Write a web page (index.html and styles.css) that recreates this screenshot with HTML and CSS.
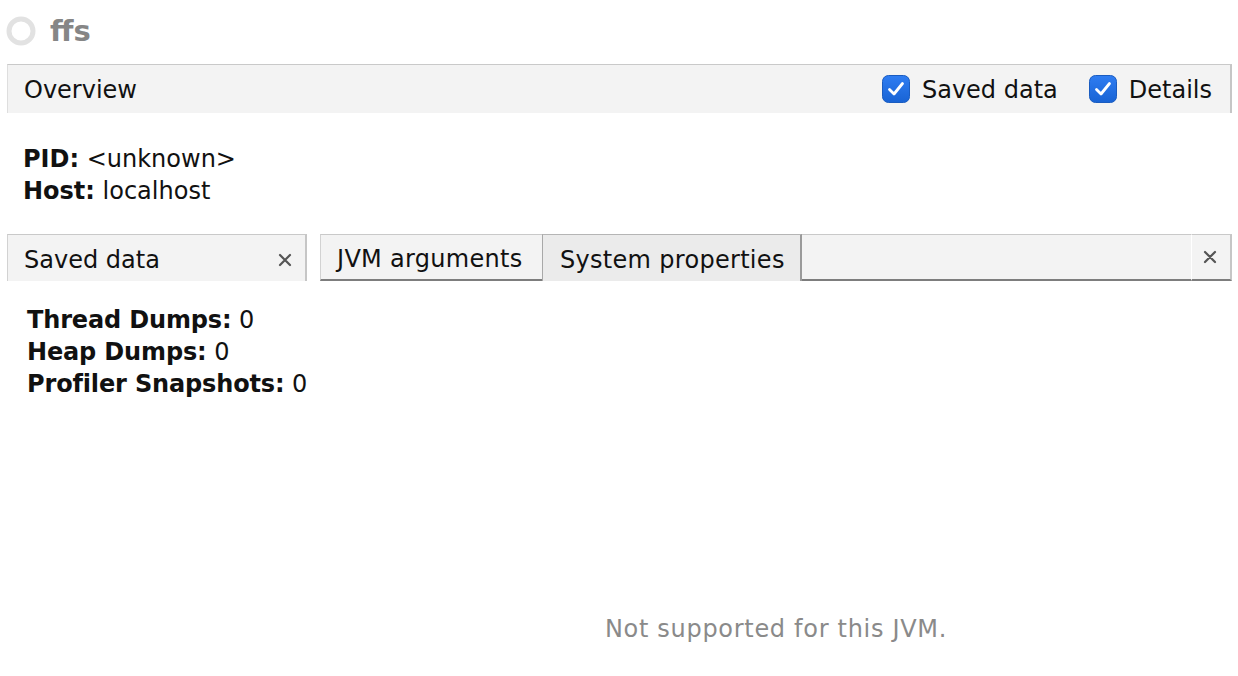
FILE: index.html
```html
<!DOCTYPE html>
<html>
<head>
<meta charset="utf-8">
<link rel="stylesheet" href="styles.css">
</head>
<body>
<div class="title">
  <svg class="status" width="30" height="30" viewBox="0 0 30 30"><circle cx="15" cy="15" r="12" fill="none" stroke="#e2e2e2" stroke-width="5"/></svg>
  <span class="title-text">ffs</span>
</div>

<div class="overview-bar">
  <div class="overview-label">Overview</div>
  <div class="options">
    <label class="check">
      <svg width="28" height="28" viewBox="0 0 28 28"><defs><linearGradient id="g1" x1="0" y1="0" x2="0" y2="1"><stop offset="0" stop-color="#2f7df2"/><stop offset="1" stop-color="#1863d4"/></linearGradient></defs><rect x="0.5" y="0.5" width="27" height="27" rx="6" fill="url(#g1)" stroke="#1a5cc0" stroke-width="1"/><path d="M7.5 14.5 L12 19 L20.5 8.5" fill="none" stroke="#fff" stroke-width="2.8" stroke-linecap="round" stroke-linejoin="round"/></svg>
      <span>Saved data</span>
    </label>
    <label class="check">
      <svg width="28" height="28" viewBox="0 0 28 28"><defs><linearGradient id="g2" x1="0" y1="0" x2="0" y2="1"><stop offset="0" stop-color="#2f7df2"/><stop offset="1" stop-color="#1863d4"/></linearGradient></defs><rect x="0.5" y="0.5" width="27" height="27" rx="6" fill="url(#g2)" stroke="#1a5cc0" stroke-width="1"/><path d="M7.5 14.5 L12 19 L20.5 8.5" fill="none" stroke="#fff" stroke-width="2.8" stroke-linecap="round" stroke-linejoin="round"/></svg>
      <span>Details</span>
    </label>
  </div>
</div>

<div class="info">
  <div class="line"><b>PID:</b> &lt;unknown&gt;</div>
  <div class="line"><b>Host:</b> localhost</div>
</div>

<div class="panels">
  <div class="panel left">
    <div class="tabbar">
      <div class="tab single">
        <span>Saved data</span>
        <svg class="close" width="14" height="14" viewBox="0 0 14 14"><path d="M2 2 L12 12 M12 2 L2 12" stroke="#555" stroke-width="2.2" stroke-linecap="round"/></svg>
      </div>
    </div>
    <div class="saved">
      <div class="line"><b>Thread Dumps:</b> 0</div>
      <div class="line"><b>Heap Dumps:</b> 0</div>
      <div class="line"><b>Profiler Snapshots:</b> 0</div>
    </div>
  </div>
  <div class="panel right">
    <div class="tabbar">
      <div class="tab jvm">JVM arguments</div>
      <div class="tab selected">System properties</div>
      <div class="tab-fill"></div>
      <div class="tab-close">
        <svg class="close" width="14" height="14" viewBox="0 0 14 14"><path d="M2 2 L12 12 M12 2 L2 12" stroke="#555" stroke-width="2.2" stroke-linecap="round"/></svg>
      </div>
    </div>
    <div class="message">Not supported for this JVM.</div>
  </div>
</div>
</body>
</html>
```

FILE: styles.css
```css
html, body {
  margin: 0;
  padding: 0;
  background: #ffffff;
}
body {
  font-family: "DejaVu Sans", "Verdana", sans-serif;
  font-size: 24px;
  color: #111;
  width: 1238px;
  height: 676px;
  overflow: hidden;
}
.title {
  display: flex;
  align-items: center;
  height: 62px;
  padding-left: 6px;
  gap: 14px;
}
.status {
  display: block;
}
.title-text {
  font-weight: bold;
  font-size: 29px;
  color: #868686;
}
.overview-bar {
  margin: 2px 6px 0 7px;
  height: 48px;
  background: #f3f3f3;
  border-top: 1px solid #c9c9c9;
  border-left: 1px solid #dedede;
  border-right: 2px solid #c6c6c6;
  display: flex;
  align-items: center;
  justify-content: space-between;
}
.overview-label {
  padding-left: 16px;
  position: relative;
  top: 1px;
}
.options {
  display: flex;
  align-items: center;
  gap: 31px;
  padding-right: 18px;
}
.check {
  display: flex;
  align-items: center;
  gap: 12px;
}
.check svg {
  display: block;
}
.check span {
  position: relative;
  top: 1px;
}
.info {
  padding: 30px 0 0 23px;
}
.line {
  line-height: 32px;
  height: 32px;
  white-space: nowrap;
}
.panels {
  display: flex;
  margin-top: 27px;
  padding-left: 7px;
  padding-right: 6px;
  gap: 13px;
}
.panel.left {
  width: 300px;
  flex-shrink: 0;
}
.panel.right {
  flex: 1;
  min-width: 0;
}
.tabbar {
  display: flex;
  height: 47px;
}
.tab {
  display: flex;
  align-items: center;
  flex-shrink: 0;
  white-space: nowrap;
  background: #f3f3f3;
  border-top: 1px solid #c9c9c9;
  border-left: 1px solid #d2d2d2;
  box-sizing: border-box;
  height: 47px;
  padding: 4px 16px 0;
  border-bottom: 2px solid #7d7d7d;
}
.tab.jvm {
  width: 222px;
  letter-spacing: 0.3px;
}
.tab.single {
  width: 300px;
  border-right: 2px solid #c6c6c6;
  border-bottom: none;
  justify-content: space-between;
  padding: 4px 13px 0 16px;
}
.tab.selected {
  width: 260px;
  background: #ebebeb;
  border-top: 1px solid #b5b5b5;
  border-left: 1px solid #a8a8a8;
  border-right: 2px solid #9a9a9a;
  border-bottom: none;
  padding: 4px 17px 0;
  letter-spacing: 0.3px;
}
.tab-fill {
  flex: 1;
  background: #f3f3f3;
  border-top: 1px solid #c9c9c9;
  border-bottom: 2px solid #7d7d7d;
  box-sizing: border-box;
  height: 47px;
}
.tab-close {
  width: 41px;
  flex-shrink: 0;
  display: flex;
  align-items: center;
  justify-content: center;
  background: #f3f3f3;
  border-top: 1px solid #c9c9c9;
  border-left: 1px solid #ffffff;
  border-right: 2px solid #c6c6c6;
  border-bottom: 2px solid #7d7d7d;
  box-sizing: border-box;
  height: 47px;
  padding-right: 3px;
}
.close {
  display: block;
}
.saved {
  padding: 23px 0 0 20px;
}
.saved b {
  letter-spacing: -0.15px;
}
.message {
  padding-top: 333px;
  text-align: center;
  color: #8a8a8a;
  line-height: 30px;
  letter-spacing: 0.7px;
}
```
